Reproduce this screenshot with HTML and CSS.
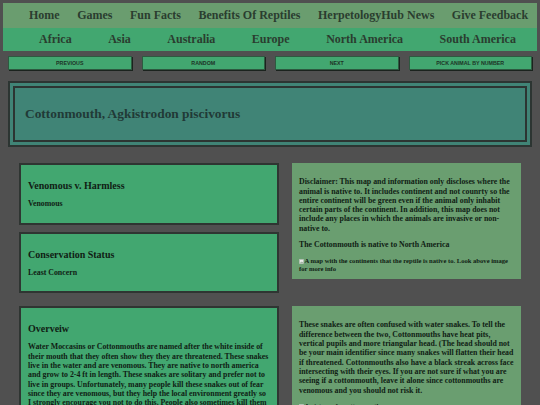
FILE: index.html
```html
<!DOCTYPE html>
<html lang="en">
<head>
<meta charset="utf-8">
<title>Cottonmouth - HerpetologyHub</title>
<link rel="stylesheet" href="styles.css">
</head>
<body>
<nav class="topnav">
  <ul class="nav-main">
    <li>Home</li>
    <li>Games</li>
    <li>Fun Facts</li>
    <li>Benefits Of Reptiles</li>
    <li>HerpetologyHub News</li>
    <li>Give Feedback</li>
  </ul>
  <ul class="nav-regions">
    <li>Africa</li>
    <li>Asia</li>
    <li>Australia</li>
    <li>Europe</li>
    <li>North America</li>
    <li>South America</li>
  </ul>
</nav>

<div class="pager">
  <button class="pager-btn">PREVIOUS</button>
  <button class="pager-btn">RANDOM</button>
  <button class="pager-btn">NEXT</button>
  <button class="pager-btn">PICK ANIMAL BY NUMBER</button>
</div>

<header class="title-frame">
  <div class="title-inner">
    <h1 class="species">Cottonmouth, Agkistrodon piscivorus</h1>
  </div>
</header>

<main class="facts">
  <div class="stack">
    <section class="card">
      <h3>Venomous v. Harmless</h3>
      <p>Venomous</p>
    </section>
    <section class="card">
      <h3>Conservation Status</h3>
      <p>Least Concern</p>
    </section>
  </div>

  <aside class="note">
    <p>Disclaimer: This map and information only discloses where the animal is native to. It includes continent and not counrty so the entire continent will be green even if the animal only inhabit certain parts of the continent. In addition, this map does not include any places in which the animals are invasive or non-native to.</p>
    <p class="native">The Cottonmouth is native to North America</p>
    <p class="alt"><svg class="broken" width="5" height="5" viewBox="0 0 5 5"><rect x="0.5" y="0.5" width="4" height="4" fill="#e9ece9" stroke="#b9c0ba" stroke-width="0.6"/><path d="M1 4 L2.2 2.4 L3 3.3 L3.6 2.7 L4.3 4 Z" fill="#9fb3a2"/></svg>A map with the continents that the reptile is native to. Look above image for more info</p>
  </aside>

  <section class="card">
    <h3>Overveiw</h3>
    <p>Water Moccasins or Cottonmouths are named after the white inside of their mouth that they often show they they are threatened. These snakes live in the water and are venomous. They are native to north america and grow to 2-4 ft in length. These snakes are solitary and prefer not to live in groups. Unfortunately, many people kill these snakes out of fear since they are venomous, but they help the local environment greatly so I strongly encourage you not to do this. People also sometimes kill them by mistake when they think they are a different snake.</p>
  </section>

  <aside class="note">
    <p>These snakes are often confused with water snakes. To tell the difference between the two, Cottonmouths have heat pits, vertical pupils and more triangular head. (The head should not be your main identifier since many snakes will flatten their head if threatened. Cottonmouths also have a black streak across face intersecting with their eyes. If you are not sure if what you are seeing if a cottonmouth, leave it alone since cottonmouths are venomous and you should not risk it.</p>
    <p class="alt"><svg class="broken" width="5" height="5" viewBox="0 0 5 5"><rect x="0.5" y="0.5" width="4" height="4" fill="#e9ece9" stroke="#b9c0ba" stroke-width="0.6"/><path d="M1 4 L2.2 2.4 L3 3.3 L3.6 2.7 L4.3 4 Z" fill="#9fb3a2"/></svg>A picture of a cottonmouth</p>
  </aside>
</main>
</body>
</html>
```

FILE: styles.css
```css
html, body {
  margin: 0;
  padding: 0;
}

body {
  background: #505050;
  font-family: "Liberation Serif", "Times New Roman", serif;
  font-weight: bold;
  color: #101d14;
  width: 540px;
  height: 405px;
  overflow: hidden;
}

/* ---------- top navigation ---------- */
.topnav {
  margin: 3px 3px 0;
}

.topnav ul {
  list-style: none;
  margin: 0;
  display: flex;
  align-items: center;
  font-size: 12px;
  color: #2a3d2f;
  white-space: nowrap;
}

.nav-main {
  height: 25px;
  padding: 0 0 0 26px;
  gap: 17.5px;
  background: #6a9d6f;
}

.nav-regions {
  height: 23px;
  padding: 0 0 0 36px;
  gap: 36.5px;
  background: #42a770;
}

/* ---------- pager buttons ---------- */
.pager {
  display: grid;
  grid-template-columns: repeat(4, 1fr);
  gap: 10px;
  margin: 5px 8px 0;
}

.pager-btn {
  height: 14px;
  padding: 0;
  background: #42a770;
  border: 1px solid #2d5a40;
  box-shadow: 1px 1px 0 #1b231e;
  font-family: "Liberation Sans", Arial, sans-serif;
  font-weight: bold;
  font-size: 5.3px;
  color: #1d3326;
}

/* ---------- species title ---------- */
.title-frame {
  margin: 11px 8px 0;
  height: 66px;
  box-sizing: border-box;
  border: 2px solid #2c3532;
  padding: 3px;
  background: #408476;
}

.title-inner {
  height: 100%;
  box-sizing: border-box;
  border: 2px solid #2c3532;
  display: flex;
  align-items: center;
  padding-left: 10px;
}

.species {
  margin: 0;
  font-size: 13.4px;
  color: #213a37;
}

/* ---------- fact grid ---------- */
.facts {
  display: grid;
  grid-template-columns: 260px 229px;
  column-gap: 13px;
  row-gap: 13px;
  align-items: start;
  margin: 16px 19px 0;
}

.stack {
  display: flex;
  flex-direction: column;
  gap: 7px;
}

.card {
  background: #42a770;
  border: 2px solid #2f3532;
  padding: 15px 7px 14px;
}

.card h3 {
  margin: 0;
  font-size: 10px;
  line-height: 12px;
}

.card p {
  margin: 7.3px 0 0;
  font-size: 7.85px;
  line-height: 9.3px;
}

.note {
  background: #6a9e70;
  padding: 14.3px 7px 6.7px;
}

.note p {
  margin: 0;
  font-size: 7.85px;
  line-height: 9.3px;
}

.note p + p {
  margin-top: 7.2px;
}

.note .alt {
  font-size: 6.6px;
  line-height: 7.5px;
  margin-top: 7.6px;
}

.broken {
  display: inline-block;
  vertical-align: -0.5px;
  margin-right: 0.5px;
}
```
